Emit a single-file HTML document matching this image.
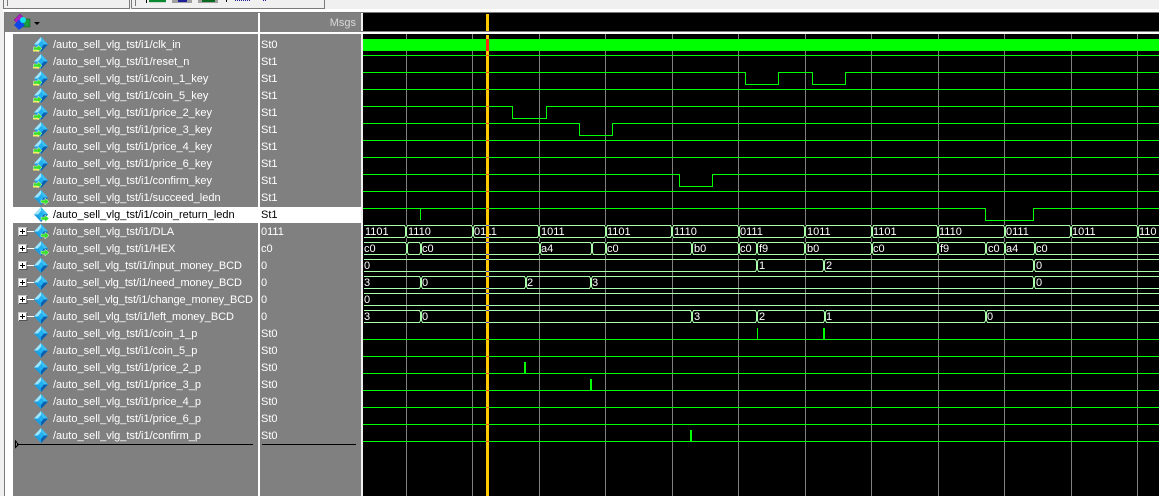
<!DOCTYPE html>
<html><head><meta charset="utf-8"><style>
html,body{margin:0;padding:0;width:1159px;height:496px;overflow:hidden;background:#f0f0f0}
svg{display:block;font-family:"Liberation Sans",sans-serif;font-size:11px}
.n text,.v text{fill:#fff}
.b text{fill:#fff}
.c{shape-rendering:crispEdges}
</style></head><body>
<svg width="1159" height="496" viewBox="0 0 1159 496" xmlns="http://www.w3.org/2000/svg">
<defs>
<g id="t"><rect x="0" y="0" width="2" height="13" fill="#000"/><path d="M-1 .5H-.5L.5 2.5V10.5L-.5 12.5H-1M3 .5H2.500L1.500 2.500V10.500L2.500 12.500H3" fill="none" stroke="#aaffaa"/></g>
<g id="d"><path d="M41 37L48 44.500L41 52L34 44.500Z" fill="#1c9fe0"/><path d="M41 37L34 44.500L38 44.500L41 41Z" fill="#9fe6ff"/><path d="M41 37L48 44.500L44 44.500L41 41Z" fill="#3cc0f4"/><path d="M38 44.500L41 41L44 44.500L41 48Z" fill="#20b0f0"/><path d="M48 44.500L41 52L41 48L44 44.500Z" fill="#0a5fb0"/></g>
<g id="ai"><path d="M33.500 47H38V45L42 48.500L38 52V50H33.500Z" fill="#38e028" stroke="#fff" stroke-width=".4"/><rect x="33" y="50" width="6" height="1.500" fill="#f4f060"/></g>
<g id="ao"><path d="M41 47H45V45L49 48.500L45 52V50H41Z" fill="#38e028" stroke="#fff" stroke-width=".4"/></g>
<g id="p"><rect x="18.500" y="-4.500" width="8" height="8" fill="#fff" stroke="#c8c8c8"/><path d="M19 3.500H27V-4" fill="none" stroke="#505050"/><path d="M20 -.5H25M22.500 -3V2" stroke="#000"/><path d="M27 -.5H34" stroke="#fff"/></g>
</defs>

<!-- toolbar -->
<rect width="1159" height="496" fill="#f0f0f0"/>
<g class="c" fill="none" stroke="#7a7a7a">
<path d="M3.500 0V8.500H129.500V0M7.500 0V6"/>
<path d="M131.500 8.500H324.500V0M131.500 0V8.500M135.500 0V6"/>
</g>
<g class="c">
<rect x="149" y="0" width="17" height="3" fill="#c8d8c8"/><rect x="149" y="0" width="17" height="2" fill="#0a8a30"/>
<rect x="172" y="0" width="20" height="3" fill="#a0a0a0"/><rect x="178" y="0" width="9" height="2" fill="#20209a"/>
<rect x="198" y="0" width="20" height="3" fill="#a0a0a0"/><rect x="202" y="0" width="13" height="2" fill="#0a6a20"/>
<rect x="146" y="0" width="1" height="3" fill="#000"/>
<rect x="226" y="0" width="1" height="2" fill="#000"/>
<path d="M235 .5h1M237 .5h1M239 .5h1M241 .5h1M243 .5h1M245 .5h1M247 .5h1M249 .5h1M263 .5h1M265 .5h1" stroke="#20209a"/>
</g>

<!-- panel -->
<g class="c">
<rect x="0" y="9" width="1159" height="3" fill="#fff"/>
<rect x="0" y="0" width="3" height="12" fill="#f0f0f0"/>
<rect x="4" y="12" width="1155" height="1" fill="#7a7a7a"/>
<rect x="4" y="12" width="1" height="484" fill="#7a7a7a"/>
<rect x="5" y="13" width="356" height="483" fill="#fff"/>
<rect x="5" y="13" width="253" height="19" fill="#808080"/>
<rect x="260" y="13" width="101" height="19" fill="#808080"/>
<rect x="13" y="34" width="245" height="462" fill="#808080"/>
<rect x="260" y="34" width="101" height="462" fill="#808080"/>
<rect x="363" y="13" width="796" height="483" fill="#000"/>
<rect x="361" y="32" width="798" height="2" fill="#fff"/>
<rect x="361" y="31" width="798" height="1" fill="#808080"/>
<rect x="13" y="207" width="245" height="16" fill="#fff"/>
<rect x="260" y="207" width="101" height="16" fill="#fff"/>
</g>

<!-- header icon -->
<path d="M14 20L20 14L26 20L20 26Z" fill="#b020c0" stroke="#601070" stroke-width=".5"/>
<rect x="21" y="19" width="9" height="8" fill="#1c9a3c" stroke="#0c5020" stroke-width=".5"/>
<path d="M14 25L19 19.500L25 25L19 30Z" fill="#1048e8"/>
<circle cx="23" cy="20" r="3" fill="#10e0f0"/>
<path d="M34 22H40L37 25Z" fill="#000"/>
<text x="356" y="26" text-anchor="end" fill="#d8d8d8">Msgs</text>

<!-- signal icons -->
<use href="#d" y="0"/><use href="#ai" y="0"/>
<use href="#d" y="17"/><use href="#ai" y="17"/>
<use href="#d" y="34"/><use href="#ai" y="34"/>
<use href="#d" y="51"/><use href="#ai" y="51"/>
<use href="#d" y="68"/><use href="#ai" y="68"/>
<use href="#d" y="85"/><use href="#ai" y="85"/>
<use href="#d" y="102"/><use href="#ai" y="102"/>
<use href="#d" y="119"/><use href="#ai" y="119"/>
<use href="#d" y="136"/><use href="#ai" y="136"/>
<use href="#d" y="153"/><use href="#ao" y="153"/>
<use href="#d" y="170"/><use href="#ao" y="170"/>
<use href="#d" y="187"/><use href="#ao" y="187"/>
<use href="#d" y="204"/><use href="#ao" y="204"/>
<use href="#d" y="221"/><use href="#d" y="238"/><use href="#d" y="255"/><use href="#d" y="272"/>
<use href="#d" y="289"/><use href="#d" y="306"/><use href="#d" y="323"/><use href="#d" y="340"/>
<use href="#d" y="357"/><use href="#d" y="374"/><use href="#d" y="391"/>
<use href="#p" y="232"/><use href="#p" y="249"/><use href="#p" y="266"/><use href="#p" y="283"/><use href="#p" y="300"/><use href="#p" y="317"/>

<!-- names -->
<g class="n">
<text x="53" y="48">/auto_sell_vlg_tst/i1/clk_in</text>
<text x="53" y="65">/auto_sell_vlg_tst/i1/reset_n</text>
<text x="53" y="82">/auto_sell_vlg_tst/i1/coin_1_key</text>
<text x="53" y="99">/auto_sell_vlg_tst/i1/coin_5_key</text>
<text x="53" y="116">/auto_sell_vlg_tst/i1/price_2_key</text>
<text x="53" y="133">/auto_sell_vlg_tst/i1/price_3_key</text>
<text x="53" y="150">/auto_sell_vlg_tst/i1/price_4_key</text>
<text x="53" y="167">/auto_sell_vlg_tst/i1/price_6_key</text>
<text x="53" y="184">/auto_sell_vlg_tst/i1/confirm_key</text>
<text x="53" y="201">/auto_sell_vlg_tst/i1/succeed_ledn</text>
<text x="53" y="218" style="fill:#000">/auto_sell_vlg_tst/i1/coin_return_ledn</text>
<text x="53" y="235">/auto_sell_vlg_tst/i1/DLA</text>
<text x="53" y="252">/auto_sell_vlg_tst/i1/HEX</text>
<text x="53" y="269" textLength="189">/auto_sell_vlg_tst/i1/input_money_BCD</text>
<text x="53" y="286" textLength="189">/auto_sell_vlg_tst/i1/need_money_BCD</text>
<text x="53" y="303" textLength="200">/auto_sell_vlg_tst/i1/change_money_BCD</text>
<text x="53" y="320" textLength="181">/auto_sell_vlg_tst/i1/left_money_BCD</text>
<text x="53" y="337">/auto_sell_vlg_tst/i1/coin_1_p</text>
<text x="53" y="354">/auto_sell_vlg_tst/i1/coin_5_p</text>
<text x="53" y="371">/auto_sell_vlg_tst/i1/price_2_p</text>
<text x="53" y="388">/auto_sell_vlg_tst/i1/price_3_p</text>
<text x="53" y="405">/auto_sell_vlg_tst/i1/price_4_p</text>
<text x="53" y="422">/auto_sell_vlg_tst/i1/price_6_p</text>
<text x="53" y="439">/auto_sell_vlg_tst/i1/confirm_p</text>
</g>
<!-- values -->
<g class="v">
<text x="261" y="48">St0</text><text x="261" y="65">St1</text><text x="261" y="82">St1</text><text x="261" y="99">St1</text>
<text x="261" y="116">St1</text><text x="261" y="133">St1</text><text x="261" y="150">St1</text><text x="261" y="167">St1</text>
<text x="261" y="184">St1</text><text x="261" y="201">St1</text><text x="261" y="218" style="fill:#000">St1</text>
<text x="261" y="235">0111</text><text x="261" y="252">c0</text><text x="261" y="269">0</text><text x="261" y="286">0</text><text x="261" y="303">0</text><text x="261" y="320">0</text>
<text x="261" y="337">St0</text><text x="261" y="354">St0</text><text x="261" y="371">St0</text><text x="261" y="388">St0</text><text x="261" y="405">St0</text><text x="261" y="422">St0</text><text x="261" y="439">St0</text>
</g>
<g class="c" fill="none" stroke="#000">
<path d="M17 444.500H253M262 444.500H356M15.500 441V447.500L18.500 444.500Z"/>
</g>

<!-- grid -->
<g class="c" stroke="#808080" fill="none">
<path d="M406.500 34V496M472.500 34V496M539.500 34V496M605.500 34V496M672.500 34V496M738.500 34V496M805.500 34V496M871.500 34V496M938.500 34V496M1004.500 34V496M1071.500 34V496M1137.500 34V496"/>
</g>

<!-- scalar waves -->
<g class="c">
<rect x="363" y="39" width="796" height="12" fill="#00ff00"/>
<g fill="none" stroke="#00ff00">
<path d="M363 55.500H1159"/>
<path d="M363 72.500H745.500V84.500H778.500V72.500H812.500V84.500H845.500V72.500H1159"/>
<path d="M363 89.500H1159"/>
<path d="M363 106.500H512.500V118.500H546.500V106.500H1159"/>
<path d="M363 123.500H579.500V135.500H612.500V123.500H1159"/>
<path d="M363 140.500H1159M363 157.500H1159"/>
<path d="M363 174.500H679.500V186.500H712.500V174.500H1159"/>
<path d="M363 191.500H1159"/>
<path d="M363 208.500H985.500V220.500H1033.500V208.500H1159M420.500 208V220"/>
<path d="M363 339.500H1159M363 356.500H1159M363 373.500H1159M363 390.500H1159M363 407.500H1159M363 424.500H1159M363 441.500H1159"/>
<path d="M757.500 328V339"/>
</g>
<g fill="#00ff00">
<rect x="823" y="328" width="2" height="11"/>
<rect x="524" y="362" width="2" height="11"/>
<rect x="590" y="379" width="2" height="11"/>
<rect x="690" y="430" width="2" height="11"/>
</g>
<!-- bus rails -->
<path d="M364 225.500H1159M364 237.500H1159M364 242.500H1159M364 254.500H1159M364 259.500H1159M364 271.500H1159M364 276.500H1159M364 288.500H1159M364 293.500H1159M364 305.500H1159M364 310.500H1159M364 322.500H1159" fill="none" stroke="#aaffaa"/>
</g>
<!-- bus transitions -->
<use href="#t" x="405" y="225"/><use href="#t" x="472" y="225"/><use href="#t" x="538" y="225"/><use href="#t" x="605" y="225"/><use href="#t" x="671" y="225"/><use href="#t" x="738" y="225"/><use href="#t" x="804" y="225"/><use href="#t" x="871" y="225"/><use href="#t" x="937" y="225"/><use href="#t" x="1004" y="225"/><use href="#t" x="1070" y="225"/><use href="#t" x="1137" y="225"/>
<use href="#t" x="406" y="242"/><use href="#t" x="420" y="242"/><use href="#t" x="539" y="242"/><use href="#t" x="591" y="242"/><use href="#t" x="605" y="242"/><use href="#t" x="691" y="242"/><use href="#t" x="738" y="242"/><use href="#t" x="756" y="242"/><use href="#t" x="804" y="242"/><use href="#t" x="871" y="242"/><use href="#t" x="937" y="242"/><use href="#t" x="985" y="242"/><use href="#t" x="1004" y="242"/><use href="#t" x="1034" y="242"/>
<use href="#t" x="756" y="259"/><use href="#t" x="823" y="259"/><use href="#t" x="1033" y="259"/>
<use href="#t" x="420" y="276"/><use href="#t" x="525" y="276"/><use href="#t" x="590" y="276"/><use href="#t" x="1033" y="276"/>
<use href="#t" x="420" y="310"/><use href="#t" x="691" y="310"/><use href="#t" x="756" y="310"/><use href="#t" x="824" y="310"/><use href="#t" x="985" y="310"/>
<!-- bus text -->
<g class="b">
<text x="365" y="235">1101</text><text x="408" y="235">1110</text><text x="474" y="235">0111</text><text x="541" y="235">1011</text><text x="607" y="235">1101</text><text x="674" y="235">1110</text><text x="740" y="235">0111</text><text x="807" y="235">1011</text><text x="873" y="235">1101</text><text x="939" y="235">1110</text><text x="1006" y="235">0111</text><text x="1072" y="235">1011</text><text x="1139" y="235">110</text>
<text x="364" y="252">c0</text><text x="422" y="252">c0</text><text x="541" y="252">a4</text><text x="607" y="252">c0</text><text x="694" y="252">b0</text><text x="740" y="252">c0</text><text x="759" y="252">f9</text><text x="807" y="252">b0</text><text x="873" y="252">c0</text><text x="940" y="252">f9</text><text x="988" y="252">c0</text><text x="1006" y="252">a4</text><text x="1036" y="252">c0</text>
<text x="364" y="269">0</text><text x="759" y="269">1</text><text x="826" y="269">2</text><text x="1036" y="269">0</text>
<text x="364" y="286">3</text><text x="422" y="286">0</text><text x="527" y="286">2</text><text x="592" y="286">3</text><text x="1036" y="286">0</text>
<text x="364" y="303">0</text>
<text x="364" y="320">3</text><text x="422" y="320">0</text><text x="694" y="320">3</text><text x="759" y="320">2</text><text x="826" y="320">1</text><text x="987" y="320">0</text>
</g>

<!-- cursor -->
<g class="c">
<rect x="486" y="14" width="3" height="17" fill="#ffc800"/>
<rect x="486" y="35" width="3" height="461" fill="#ffc800"/>
<rect x="486" y="39" width="3" height="12" fill="#ff2a10"/>
<path d="M486 55.500h3M486 72.500h3M486 89.500h3M486 106.500h3M486 123.500h3M486 140.500h3M486 157.500h3M486 174.500h3M486 191.500h3M486 208.500h3" stroke="#ff5010"/>
<path d="M486 225.500h3M486 237.500h3M486 242.500h3M486 254.500h3M486 259.500h3M486 271.500h3M486 276.500h3M486 288.500h3M486 293.500h3M486 305.500h3M486 310.500h3M486 322.500h3" stroke="#5050c0"/>
<path d="M486 339.500h3M486 356.500h3M486 373.500h3M486 390.500h3M486 407.500h3M486 424.500h3M486 441.500h3" stroke="#ff5010"/>
</g>
</svg>
</body></html>
